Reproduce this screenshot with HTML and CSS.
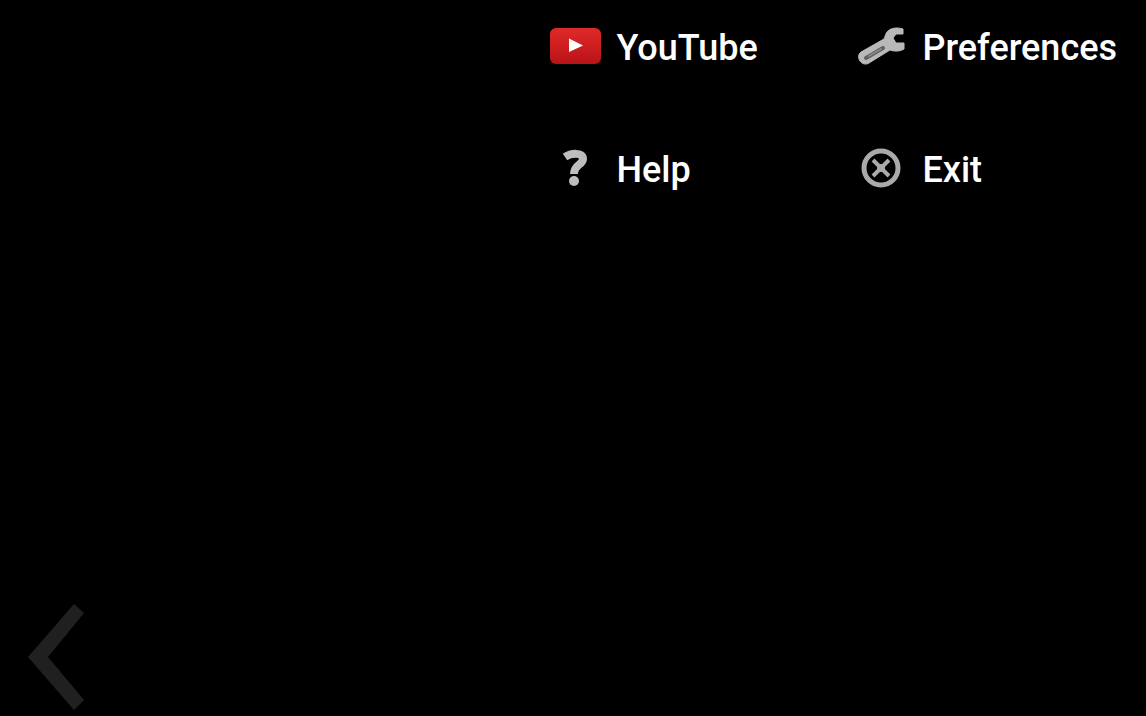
FILE: index.html
```html
<!DOCTYPE html>
<html lang="en">
<head>
  <meta charset="UTF-8">
  <meta name="viewport" content="width=device-width, initial-scale=1">
  <title>Menu</title>
  <link rel="stylesheet" href="styles.css">
</head>
<body>

  <!-- Menu -->
  <nav class="menu">
    <a class="item" href="#youtube">
      <svg class="icon" viewBox="0 0 60 48" aria-hidden="true">
        <defs>
          <linearGradient id="red" x1="0" y1="0" x2="0" y2="1">
            <stop offset="0" stop-color="#df2a29"/>
            <stop offset="1" stop-color="#b91318"/>
          </linearGradient>
        </defs>
        <rect x="5" y="6" width="51" height="36" rx="6" fill="url(#red)"/>
        <path d="M24 16.500L38 23.500L24 30Z" fill="#fff"/>
      </svg>
      <span class="label">YouTube</span>
    </a>
    <a class="item" href="#preferences">
      <svg class="icon" viewBox="0 0 60 48" aria-hidden="true">
        <path d="M52 7C46 5 39 6 36 10C34 13 34 15 33 17L10 30C7 32 7 36 9 39C11 42 15 43 18 41L39 28C44 30 50 29 53 27V21H45L42 16L45 12H52Z" fill="#b9b9b9" stroke="#b9b9b9" stroke-linejoin="round"/>
        <path d="M15 36L32 26" stroke="#606060" stroke-width="4" stroke-linecap="round"/>
        <path d="M18 34L30 27" stroke="#888" stroke-width="2" stroke-linecap="round"/>
      </svg>
      <span class="label">Preferences</span>
    </a>
    <a class="item" href="#help">
      <svg class="icon" viewBox="0 0 60 48" aria-hidden="true">
        <path d="M20 13C26 9 38 8 38 15C38 21 29 20 29 30" fill="none" stroke="#bdbdbd" stroke-width="8"/>
        <circle cx="29" cy="37" r="5" fill="#bdbdbd"/>
      </svg>
      <span class="label">Help</span>
    </a>
    <a class="item" href="#exit">
      <svg class="icon" viewBox="0 0 60 48" aria-hidden="true">
        <circle cx="30" cy="24" r="17" fill="none" stroke="#aaa" stroke-width="5"/>
        <path d="M22 16L38 32M38 16L22 32" stroke="#aaa" stroke-width="4"/>
        <circle cx="30" cy="24" r="4" fill="#aaa"/>
      </svg>
      <span class="label">Exit</span>
    </a>
  </nav>

  <!-- Back -->
  <footer class="footer">
    <button class="back" type="button" aria-label="Back">
      <svg viewBox="0 0 56 106" aria-hidden="true">
        <path d="M46 0L56 9L20 53L56 96L46 106L0 53Z" fill="#202020"/>
      </svg>
    </button>
  </footer>

</body>
</html>
```

FILE: styles.css
```css
* {
  box-sizing: border-box;
}
body {
  display: flex;
  flex-direction: column;
  min-height: 100vh;
  margin: 0;
  background: #000;
  color: #fff;
  font-family: Roboto, sans-serif;
}
.menu {
  display: grid;
  grid-template-columns: 306px auto;
  justify-content: end;
  row-gap: 60px;
  padding: 15px 29px 0 0;
}
.item {
  display: flex;
  align-items: center;
  gap: 11px;
  height: 62px;
  color: #fff;
  font-size: 36px;
  font-weight: 500;
  line-height: 40px;
  text-decoration: none;
}
.icon {
  width: 60px;
  height: 48px;
}
.label {
  padding-top: 4px;
}
.footer {
  margin-top: auto;
  padding: 0 28px 6px;
}
.back {
  display: block;
  padding: 0;
  border: 0;
  background: none;
  cursor: pointer;
}
.back svg {
  display: block;
  width: 56px;
  height: 106px;
}
```
